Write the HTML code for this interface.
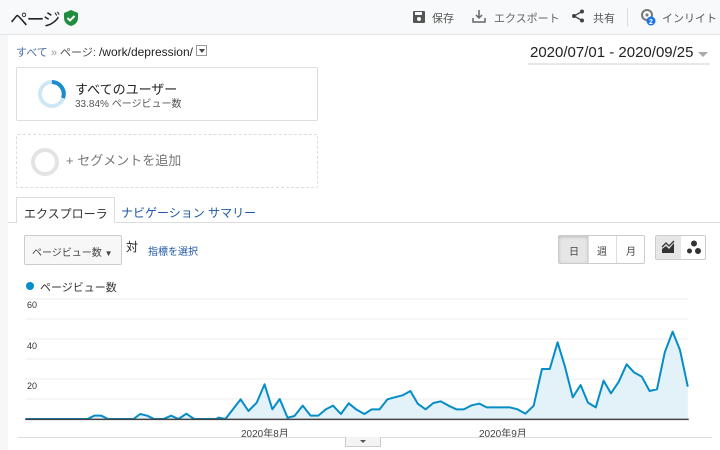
<!DOCTYPE html>
<html><head><meta charset="utf-8"><style>
*{margin:0;padding:0;box-sizing:border-box}
body{width:720px;height:450px;overflow:hidden;background:#fff;font-family:"Liberation Sans","Noto Sans CJK JP",sans-serif;color:#333;position:relative}
.a{position:absolute;white-space:nowrap}
</style></head><body>
<div class="a" style="left:0;top:0;width:720px;height:35px;background:#f8f9fa;border-bottom:1px solid #e6e6e6"></div>
<div class="a" style="left:0;top:35px;width:8px;height:415px;background:#f6f7f8"></div>
<div class="a" style="left:10px;top:6px;font-size:18px;color:#222;letter-spacing:-1.5px">ページ</div>
<svg class="a" style="left:64px;top:10px" width="14" height="16" viewBox="0 0 14 16"><path d="M7 0L14 3v5c0 4-3 7-7 8C3 15 0 12 0 8V3z" fill="#1e8e3e"/><path d="M3.5 8l2.5 2.5 4.5-4.5" stroke="#fff" stroke-width="2" fill="none"/></svg>
<svg class="a" style="left:413px;top:11px" width="12" height="12"><rect x="0" y="0" width="12" height="12" rx="1" fill="#555"/><rect x="2" y="1" width="7" height="3" fill="#f8f9fa"/><circle cx="6" cy="8" r="2" fill="#f8f9fa"/></svg>
<div class="a" style="left:432px;top:10px;font-size:11px;color:#555">保存</div>
<svg class="a" style="left:472px;top:9px" width="14" height="14"><path d="M7 1v8M4 6l3 3 3-3M1 9v4h12V9" stroke="#666" stroke-width="1.5" fill="none"/></svg>
<div class="a" style="left:494px;top:10px;font-size:11px;color:#666">エクスポート</div>
<svg class="a" style="left:571px;top:9px" width="14" height="14"><circle cx="11" cy="2.5" r="2" fill="#444"/><circle cx="3" cy="7" r="2" fill="#444"/><circle cx="11" cy="11.5" r="2" fill="#444"/><path d="M11 2.5L3 7l8 4.5" stroke="#444" stroke-width="1.3" fill="none"/></svg>
<div class="a" style="left:593px;top:10px;font-size:11px;color:#555">共有</div>
<div class="a" style="left:627px;top:8px;width:1px;height:18px;background:#ddd"></div>
<svg class="a" style="left:640px;top:8px" width="16" height="18"><circle cx="7" cy="7" r="5" stroke="#777" stroke-width="2" fill="none"/><circle cx="7" cy="7" r="1.5" fill="#777"/><circle cx="11" cy="13" r="4.5" fill="#1a73e8"/><text x="9" y="16" font-size="7" fill="#fff" font-weight="bold" font-family="Liberation Sans">2</text></svg>
<div class="a" style="left:662px;top:10px;font-size:11px;color:#555">インリイト</div>
<div class="a" style="left:16px;top:44px;font-size:11px;color:#555"><span style="color:#4a6ea9">すべて</span> <span style="color:#999">»</span> ページ: <span style="color:#222;font-size:12px">/work/depression/</span></div>
<div class="a" style="left:196px;top:45px;width:11px;height:11px;border:1px solid #999;background:#fff"><div style="margin:3px 0 0 2px;border-left:3px solid transparent;border-right:3px solid transparent;border-top:4px solid #444;width:0"></div></div>
<div class="a" style="left:530px;top:44px;font-size:15px;color:#222">2020/07/01 - 2020/09/25</div>
<div class="a" style="left:698px;top:52px;border-left:5px solid transparent;border-right:5px solid transparent;border-top:5px solid #aaa"></div>
<div class="a" style="left:528px;top:63px;width:182px;height:2px;background:#e8e8e8"></div>
<div class="a" style="left:16px;top:67px;width:302px;height:54px;border:1px solid #ddd;border-radius:2px"></div>
<svg class="a" style="left:37px;top:79px" width="30" height="30"><circle cx="15" cy="15" r="12" stroke="#cfe7f5" stroke-width="4" fill="none"/><path d="M15 3A12 12 0 0 1 26 19" stroke="#1a8bd0" stroke-width="4" fill="none"/></svg>
<div class="a" style="left:75px;top:79px;font-size:13px;color:#222">すべてのユーザー</div>
<div class="a" style="left:75px;top:95px;font-size:10px;color:#555">33.84% ページビュー数</div>
<div class="a" style="left:16px;top:134px;width:302px;height:54px;border:1px dashed #ddd;border-radius:2px"></div>
<svg class="a" style="left:30px;top:147px" width="30" height="30"><circle cx="15" cy="15" r="12" stroke="#e3e3e3" stroke-width="4" fill="none"/></svg>
<div class="a" style="left:66px;top:150px;font-size:13px;color:#777">+ セグメントを追加</div>
<div class="a" style="left:8px;top:222px;width:712px;height:1px;background:#ddd"></div>
<div class="a" style="left:16px;top:197px;width:99px;height:26px;border:1px solid #ddd;border-bottom:none;background:#fff;font-size:12px;color:#333;padding:7px 0 0 7px">エクスプローラ</div>
<div class="a" style="left:121px;top:204px;font-size:12px;color:#1f58a8">ナビゲーション サマリー</div>
<div class="a" style="left:24px;top:235px;width:98px;height:30px;border:1px solid #ccc;border-radius:2px;background:#f7f7f7;font-size:10px;color:#444;padding:8px 0 0 7px">ページビュー数 <span style="font-size:8px">▼</span></div>
<div class="a" style="left:126px;top:238px;font-size:12px;color:#222">対</div>
<div class="a" style="left:148px;top:243px;font-size:10px;color:#1f58a8">指標を選択</div>
<div class="a" style="left:558px;top:235px;width:87px;height:29px;border:1px solid #ccc;border-radius:2px;background:#fff;font-size:10px;color:#444"><div style="position:absolute;left:0;top:0;width:29px;height:27px;background:#e6e6e6;box-shadow:inset 0 1px 3px #bbb"></div><div style="position:absolute;left:29px;top:0;width:1px;height:27px;background:#ddd"></div><div style="position:absolute;left:57px;top:0;width:1px;height:27px;background:#ddd"></div><span style="position:absolute;left:10px;top:7px">日</span><span style="position:absolute;left:38px;top:7px">週</span><span style="position:absolute;left:67px;top:7px">月</span></div>
<div class="a" style="left:655px;top:235px;width:51px;height:25px;border:1px solid #ccc;border-radius:2px;background:#fff"><div style="position:absolute;left:0;top:0;width:25px;height:23px;background:#e6e6e6"></div><svg style="position:absolute;left:5px;top:4px" width="15" height="15"><path d="M1 13L1 9 5 6 8 9 13 3 13 13z" fill="#333"/><path d="M1 7l4-4 3 3 5-5" stroke="#333" stroke-width="1.3" fill="none"/></svg><svg style="position:absolute;left:30px;top:4px" width="16" height="15"><circle cx="8" cy="3.5" r="3" fill="#333"/><circle cx="3.5" cy="11" r="2.5" fill="#333"/><circle cx="12" cy="11" r="3" fill="#333"/></svg></div>
<div class="a" style="left:26px;top:282px;width:8px;height:8px;border-radius:50%;background:#058dc7"></div>
<div class="a" style="left:40px;top:279px;font-size:11px;color:#333">ページビュー数</div>
<div class="a" style="left:27px;top:300px;font-size:9px;color:#333">60</div>
<div class="a" style="left:27px;top:341px;font-size:9px;color:#333">40</div>
<div class="a" style="left:27px;top:381px;font-size:9px;color:#333">20</div>
<svg class="a" style="left:0;top:290px" width="720" height="160" viewBox="0 -90 1565 480" preserveAspectRatio="none">
<g stroke="#eee" stroke-width="1" vector-effect="non-scaling-stroke"><line vector-effect="non-scaling-stroke" x1="55" y1="-63" x2="1497" y2="-63"/><line vector-effect="non-scaling-stroke" x1="55" y1="-3" x2="1497" y2="-3"/><line vector-effect="non-scaling-stroke" x1="55" y1="57" x2="1497" y2="57"/><line vector-effect="non-scaling-stroke" x1="55" y1="117" x2="1497" y2="117"/><line vector-effect="non-scaling-stroke" x1="55" y1="177" x2="1497" y2="177"/><line vector-effect="non-scaling-stroke" x1="55" y1="237" x2="1497" y2="237"/></g>
<polygon fill="#e3f1f9" points="55,297 190,297 205,287 220,287 235,297 290,297 305,282 320,287 335,297 355,297 372,287 388,297 405,281 422,297 470,297 475,293 490,297 523,238 540,273 558,248 575,193 592,268 608,237 625,293 640,288 658,257 675,287 692,287 708,268 724,257 741,282 758,250 775,269 792,282 808,268 825,268 842,238 858,232 875,226 892,213 908,251 925,268 942,249 958,244 975,257 992,268 1008,268 1025,256 1042,251 1058,262 1075,262 1108,262 1125,268 1142,281 1160,257 1178,147 1195,147 1212,67 1228,140 1245,232 1262,195 1278,248 1295,262 1312,182 1328,220 1345,185 1362,133 1378,157 1395,170 1412,213 1428,208 1445,97 1462,35 1478,90 1495,200 1495,297"/>
<polyline fill="none" stroke="#058dc7" stroke-width="2" vector-effect="non-scaling-stroke" stroke-linejoin="round" points="55,297 190,297 205,287 220,287 235,297 290,297 305,282 320,287 335,297 355,297 372,287 388,297 405,281 422,297 470,297 475,293 490,297 523,238 540,273 558,248 575,193 592,268 608,237 625,293 640,288 658,257 675,287 692,287 708,268 724,257 741,282 758,250 775,269 792,282 808,268 825,268 842,238 858,232 875,226 892,213 908,251 925,268 942,249 958,244 975,257 992,268 1008,268 1025,256 1042,251 1058,262 1075,262 1108,262 1125,268 1142,281 1160,257 1178,147 1195,147 1212,67 1228,140 1245,232 1262,195 1278,248 1295,262 1312,182 1328,220 1345,185 1362,133 1378,157 1395,170 1412,213 1428,208 1445,97 1462,35 1478,90 1495,200"/>
<line x1="55" y1="298" x2="1497" y2="298" stroke="#444" stroke-width="1.5" vector-effect="non-scaling-stroke"/>
</svg>
<div class="a" style="left:241px;top:425px;font-size:10px;color:#444">2020年8月</div>
<div class="a" style="left:479px;top:425px;font-size:10px;color:#444">2020年9月</div>
<div class="a" style="left:18px;top:437px;width:694px;height:1px;background:#ddd"></div>
<div class="a" style="left:345px;top:437px;width:36px;height:10px;border:1px solid #ccc;border-top:none;background:#f4f4f4"><div style="margin:3px auto 0;width:0;border-left:3px solid transparent;border-right:3px solid transparent;border-top:3px solid #555"></div></div>
</body></html>
